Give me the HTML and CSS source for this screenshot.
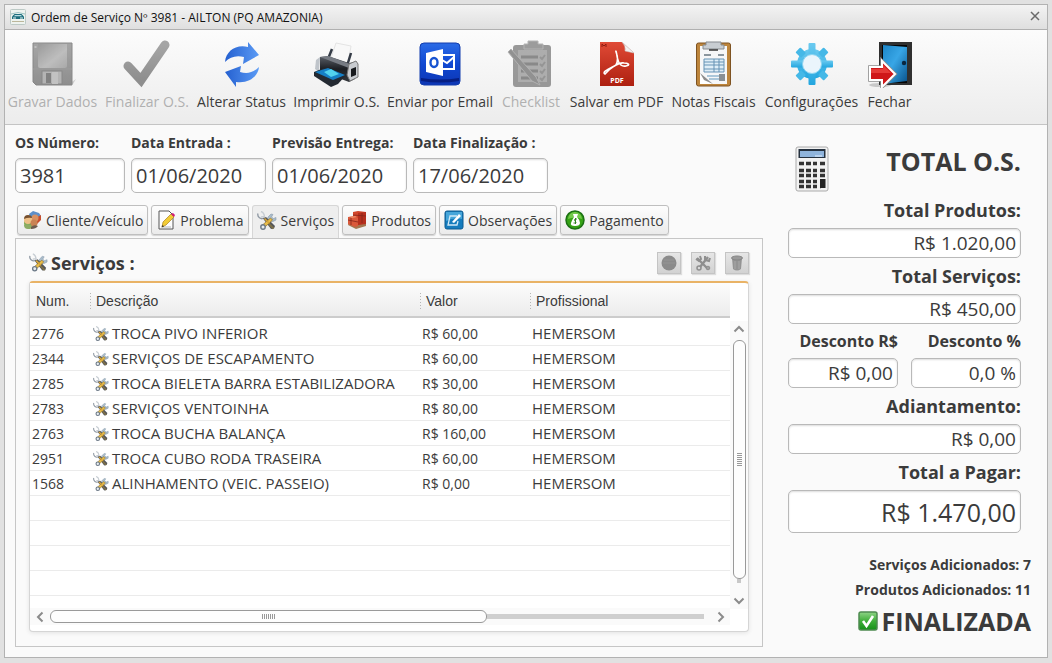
FILE: index.html
```html
<!DOCTYPE html>
<html lang="pt-BR">
<head>
<meta charset="utf-8">
<title>Ordem de Serviço Nº 3981 - AILTON (PQ AMAZONIA)</title>
<link rel="stylesheet" href="styles.css">
</head>
<body>
<svg class="defs" aria-hidden="true">
  <defs>
    <linearGradient id="gray" x1="0" y1="0" x2="0" y2="1"><stop offset="0" stop-color="#979797"/><stop offset="1" stop-color="#7d7d7d"/></linearGradient>
    <linearGradient id="metal" x1="0" y1="0" x2="1" y2="1"><stop offset="0" stop-color="#8a8a8a"/><stop offset=".6" stop-color="#b4b4b4"/><stop offset="1" stop-color="#9c9c9c"/></linearGradient>
    <linearGradient id="blue" x1="0" y1="0" x2="1" y2="0"><stop offset="0" stop-color="#2560d0"/><stop offset="1" stop-color="#5b9bf5"/></linearGradient>
    <linearGradient id="outlook" x1="0" y1="0" x2="0" y2="1"><stop offset="0" stop-color="#2b6be6"/><stop offset=".5" stop-color="#1048d2"/><stop offset="1" stop-color="#0d36b4"/></linearGradient>
    <linearGradient id="red" x1="0" y1="0" x2="0" y2="1"><stop offset="0" stop-color="#e04a36"/><stop offset="1" stop-color="#ad2010"/></linearGradient>
    <linearGradient id="gear" x1="0" y1="0" x2="0" y2="1"><stop offset="0" stop-color="#6bcaf0"/><stop offset="1" stop-color="#23a6df"/></linearGradient>
    <linearGradient id="door" x1="0" y1="0" x2="1" y2="1"><stop offset="0" stop-color="#1d86c8"/><stop offset=".45" stop-color="#38a6e6"/><stop offset="1" stop-color="#08518a"/></linearGradient>
    <linearGradient id="printer" x1="0" y1="0" x2="0" y2="1"><stop offset="0" stop-color="#5b6068"/><stop offset=".5" stop-color="#1c1f24"/><stop offset="1" stop-color="#34383d"/></linearGradient>
    <linearGradient id="green" x1="0" y1="0" x2="0" y2="1"><stop offset="0" stop-color="#8fd487"/><stop offset=".5" stop-color="#3fae39"/><stop offset="1" stop-color="#159018"/></linearGradient>
    <symbol id="tools" viewBox="0 0 20 20">
      <path d="M1 2.500a4 4 0 0 0 6 4.500l9 10" fill="none" stroke="#8d97a2" stroke-width="1.300"/>
      <path d="M4 .5q3 1 3.500 5L4 6" fill="none" stroke="#c6ccd2" stroke-width="1.400"/>
      <path d="M11 6l3-3 2 .5-1.500 2.500 2 1.500 2.500-1v2.500l-3 1.500-6-.5z" fill="#a9bccb" stroke="#8a9bab" stroke-width=".6"/>
      <path d="M6 7.500l3-1.500 9 9-1 2.500-3 .5z" fill="#54565a"/>
      <path d="M13.500 7l2 2L8 16l-2.500-2z" fill="#e8bd4a" stroke="#8f6e25" stroke-width=".7"/>
      <path d="M7.500 7.500l5 5" stroke="#d6a63a" stroke-width="1.600"/>
      <circle cx="6" cy="16" r="2.200" fill="#e7ecf0" stroke="#6c7987" stroke-width="1.400"/>
      <path d="M12 13l4.500 4.500" stroke="#7d7048" stroke-width="2"/>
    </symbol>
  </defs>
</svg>
<main class="window">
  <header class="titlebar">
    <svg class="app-icon" viewBox="0 0 16 16"><rect x=".5" y=".5" width="15" height="15" rx="1" fill="#eef3ef" stroke="#bcc9c5"/><path d="M1 5q7-3 14 0" fill="none" stroke="#9cc4c4"/><path d="M2 7.500L4.500 5h7L14 7.500V10H2z" fill="#1d6f7d"/><path d="M5 6h6l1 1.300H4z" fill="#b7dce2"/><path d="M3 9h3M10 9h3" stroke="#e7f4f4"/><path d="M2 12.500h12" stroke="#bcb79b"/></svg>
    <h1 class="window-title">Ordem de Serviço Nº 3981 - AILTON (PQ AMAZONIA)</h1>
    <button class="close" type="button" aria-label="Fechar janela"><svg viewBox="0 0 10 10"><path d="M1 1l8 8M9 1L1 9" stroke="#6a6a6a" stroke-width="1.500"/></svg></button>
  </header>

  <nav class="toolbar" aria-label="Ações">
    <button class="tool" type="button" disabled>
      <svg viewBox="0 0 48 48"><path d="M40 44l7-5-3 5z" fill="#c9c9c9"/><path d="M4 3h39v42H7l-3-3z" fill="url(#gray)" stroke="#777"/><path d="M9 4h29v22a2 2 0 0 1-2 2H11a2 2 0 0 1-2-2z" fill="url(#metal)"/><path d="M4 29h39" stroke="#8e8e8e"/><rect x="13" y="31" width="20" height="13" fill="#a9a9a9" stroke="#777"/><rect x="17" y="33" width="5" height="10" fill="#6e6e6e"/><rect x="23" y="32" width="6" height="12" fill="#bababa"/><path d="M5.500 6h2v2h-2z" fill="#b5b5b5"/></svg>
      <span>Gravar Dados</span></button>
    <button class="tool" type="button" disabled>
      <svg viewBox="0 0 48 48"><path d="M5 26l13 14L42 5" fill="none" stroke="url(#gray)" stroke-width="9" stroke-linecap="round"/></svg>
      <span>Finalizar O.S.</span></button>
    <button class="tool" type="button">
      <svg viewBox="0 0 48 48"><path d="M7 22C8 11 18 4 30 7V2l11 13-16 9 1-7c-8-2-14 0-19 5z" fill="url(#blue)"/><path d="M41 27c-1 10-11 17-23 15v5L7 32l16-6-1 6c7 2 13 1 19-5z" fill="url(#blue)"/></svg>
      <span>Alterar Status</span></button>
    <button class="tool" type="button">
      <svg viewBox="0 0 48 48"><path d="M18 18l5-15 15 3-3 18z" fill="#f8f8f8" stroke="#e4e4e4"/><path d="M19 9l-4 10M38 13l-4 13" stroke="#343b46" stroke-width="2.500"/><path d="M7 17l8-1 21 7 7-1-1 17-6 3L7 31z" fill="url(#printer)"/><path d="M7 17l8-1 22 8-1 4z" fill="#767b83"/><path d="M7 17l-4 3-1 9 4 3z" fill="#bfc4ca"/><path d="M36 24l7-3 2 3v13l-8 4-3-6z" fill="#c9ccd0" stroke="#777"/><path d="M38 29l5-2v8l-5 2z" fill="#17191c"/><path d="M1 32l10-4 22 7-8 9-7 3L1 36z" fill="#242a32"/><path d="M2 32l13-4 17 7-12 5z" fill="#1680c6"/><path d="M11 32l7-3 8 5-8 3z" fill="#52d2ee"/></svg>
      <span>Imprimir O.S.</span></button>
    <button class="tool" type="button">
      <svg viewBox="0 0 48 48"><rect x="4" y="3" width="40" height="42" rx="4" fill="url(#outlook)" stroke="#123dae"/><path d="M5 41q19 3 38 0v-3q-19 3-38 0z" fill="#061f83"/><path d="M26 15h12v14H26z" fill="none" stroke="#fff" stroke-width="2"/><path d="M26 20l5 3 7-6" fill="none" stroke="#fff" stroke-width="2"/><path d="M10 13l17-4v27l-17-4z" fill="#fff"/><ellipse cx="18" cy="22.500" rx="3.500" ry="4.500" fill="none" stroke="#1753d1" stroke-width="2.400"/></svg>
      <span>Enviar por Email</span></button>
    <button class="tool" type="button" disabled>
      <svg viewBox="0 0 48 48"><rect x="6" y="5" width="38" height="42" rx="3" fill="#898989"/><path d="M11 10h29v32H11z" fill="#a1a1a1"/><path d="M17 4h4V1h10v3h5v5H17z" fill="#8c8c8c" stroke="#a8a8a8"/><path d="M14 17h17M14 24h17M14 31h17M14 38h17" stroke="#777" stroke-width="3"/><path d="M33 17l2 2 3-4M33 24l2 2 3-4M33 31l2 2 3-4M33 38l2 2 3-4" stroke="#858585" fill="none" stroke-width="2"/><path d="M1 12l3-3 25 28 4 8-8-4z" fill="#808080" stroke="#a6a6a6"/></svg>
      <span>Checklist</span></button>
    <button class="tool" type="button">
      <svg viewBox="0 0 48 48"><path d="M7 2h22l12 11v33H7z" fill="url(#red)"/><path d="M29 2q4 4 3 9l9 2z" fill="#f1f1f1" stroke="#c7c7c7" stroke-width=".5"/><path d="M9 7V4l2 2 2-2v3" fill="none" stroke="#8e1a10"/><path d="M12 34c-4-2 6-6 11-9 4-7-1-14 0-14s0 17 10 15c5-1 2-3-2-3-5-1-14 5-19 11z" fill="none" stroke="#fff" stroke-width="1.600"/><text class="pdf-mark" x="24" y="43">PDF</text></svg>
      <span>Salvar em PDF</span></button>
    <button class="tool" type="button">
      <svg viewBox="0 0 48 48"><rect x="6.500" y="3" width="34" height="43" rx="2" fill="#bd853c" stroke="#7e5322"/><path d="M10 6h27v38H10z" fill="#f6f7f8"/><path d="M13 5h3V2h15v3h3v4H13z" fill="#c8cdd2" stroke="#858a8f"/><path d="M19 10h9" stroke="#333" stroke-width="1.500"/><path d="M14 15h7M28 15h6" stroke="#8b969e" stroke-width="2"/><path d="M14 19h20v13H14z" fill="#dfeef7" stroke="#6793b5"/><path d="M14 22h20M14 25h20M14 29h20M24 19v13M29 19v13" stroke="#6793b5"/><path d="M17 36h12M19 39h10" stroke="#abc7da" stroke-width="2"/><path d="M29 34h6v7h-6z" fill="#8a9095"/><path d="M10 33l13 11H10z" fill="#fff"/><path d="M10 33l13 11-9-4z" fill="#8d8d8d"/></svg>
      <span>Notas Fiscais</span></button>
    <button class="tool" type="button">
      <svg viewBox="0 0 48 48"><g fill="url(#gear)"><circle cx="24" cy="24" r="15"/><rect x="20.500" y="3" width="7" height="42" rx="1"/><rect x="3" y="20.500" width="42" height="7" rx="1"/></g><g fill="#45b8e7" transform="rotate(45 24 24)"><rect x="20.500" y="4" width="7" height="8" rx="1"/><rect x="20.500" y="36" width="7" height="8" rx="1"/><rect x="4" y="20.500" width="8" height="7" rx="1"/><rect x="36" y="20.500" width="8" height="7" rx="1"/></g><circle cx="24" cy="24" r="9.500" fill="#eaf5fc" stroke="#8bd4f1"/></svg>
      <span>Configurações</span></button>
    <button class="tool" type="button">
      <svg viewBox="0 0 48 48"><ellipse cx="14" cy="45" rx="11" ry="2" fill="#c8c8c8"/><path d="M13 2h33v43H13z" fill="#303030"/><path d="M16 5h25v38H16z" fill="#050505"/><path d="M17 5l24 2v34l-24 3z" fill="url(#door)"/><circle cx="38" cy="23" r="2.200" fill="#0a2740"/><path d="M4 27h12v-6l13 13-13 13v-7H4z" fill="#cf1719" stroke="#8d8d8d" stroke-width="3.600"/><path d="M4 27h12v-6l13 13-13 13v-7H4z" fill="#cf1719" stroke="#fff" stroke-width="2"/><path d="M5 29h12v-4l8 8H5z" fill="#e53a37"/></svg>
      <span>Fechar</span></button>
  </nav>

  <div class="content">
    <section class="order">
      <div class="fields">
        <label class="field field-short"><span>OS Número:</span><input type="text" value="3981"></label>
        <label class="field"><span>Data Entrada :</span><input type="text" value="01/06/2020"></label>
        <label class="field"><span>Previsão Entrega:</span><input type="text" value="01/06/2020"></label>
        <label class="field"><span>Data Finalização :</span><input type="text" value="17/06/2020"></label>
      </div>

      <div class="tabs" role="tablist">
        <button class="tab" type="button" role="tab"><svg viewBox="0 0 20 20"><circle cx="7" cy="13" r="5" fill="#79a84d"/><path d="M7 4l4-3 6 2 2 3-4 2-7-1z" fill="#5c8fc9"/><path d="M12 9l7-4v5l-4 4z" fill="#c84d2c"/><circle cx="13" cy="8" r="3.500" fill="#d99161"/><circle cx="6" cy="10" r="4" fill="#edbf86"/><path d="M2 9q0-4 4-4t4 3q-4-1-8 1z" fill="#76502f"/><circle cx="12" cy="13" r="3.500" fill="#c98355"/><path d="M2 15q5-3 9 2-1 2-5 2t-4-4z" fill="#8dac64"/><path d="M9 17q3-3 7-1-2 3-7 3z" fill="#6d5c50"/></svg>Cliente/Veículo</button>
        <button class="tab" type="button" role="tab"><svg viewBox="0 0 20 20"><path d="M3 1h10l4 4v14H3z" fill="#fdfdfd" stroke="#555"/><path d="M5 16h10v2H5z" fill="#d8dadd"/><path d="M6 17l1-5 8-8 3 3-8 8z" fill="#f2cc35" stroke="#aa821c" stroke-width=".7"/><path d="M15 4l2-1 2 2-1 2z" fill="#d31b76"/><path d="M6 17l.5-2 1.500 1.500z" fill="#222"/></svg>Problema</button>
        <button class="tab tab-active" type="button" role="tab" aria-selected="true"><svg><use href="#tools"/></svg>Serviços</button>
        <button class="tab" type="button" role="tab"><svg viewBox="0 0 20 20"><path d="M1 15l8 4 10-3v-3L2 12z" fill="#a37650"/><path d="M6 2l5-1 8 1v11l-9 2-4-3z" fill="#d1452a"/><path d="M11 3l8-1v12l-8 1z" fill="#b62f1d"/><path d="M1 7l7-1 3 2v8l-3 1-7-3z" fill="#da593b"/><path d="M4 7v8M15 3v10M1 10l10 2M6 5l13 1" stroke="#84261a" stroke-width=".8"/><path d="M2 7l6-1 2 1-5 1z" fill="#f08b66"/></svg>Produtos</button>
        <button class="tab" type="button" role="tab"><svg viewBox="0 0 20 20"><rect x="1" y="1" width="18" height="18" rx="2" fill="#167cbd" stroke="#0c5a90"/><path d="M2 2h16v7q-8-2-16 2z" fill="#46a6da"/><path d="M13 6H6l-2 9h9l1-4" fill="none" stroke="#cfe8f6" stroke-width="1.300"/><path d="M8 12l7-8 2 2-7 7z" fill="#fff"/></svg>Observações</button>
        <button class="tab" type="button" role="tab"><svg viewBox="0 0 20 20"><circle cx="10" cy="10" r="9" fill="#36a316" stroke="#1c7114" stroke-width="1.500"/><path d="M3 9a7 7 0 0 1 14 0q-7-3-14 0z" fill="#73ca4b"/><path d="M8 4h5l-1 3q3 3 3 6t-5 3-4-3 3-6z" fill="#fff"/><path d="M12 9h-2q-1 1 0 2t1 2H8.500M10.500 8v6" fill="none" stroke="#277d18" stroke-width=".9"/></svg>Pagamento</button>
      </div>

      <section class="panel">
        <div class="panel-head">
          <svg class="panel-icon"><use href="#tools"/></svg>
          <h2 class="panel-title">Serviços :</h2>
          <div class="panel-actions">
            <button class="mini" type="button" disabled aria-label="Adicionar"><svg viewBox="0 0 16 16"><circle cx="8" cy="8" r="7.500" fill="#8b8b8b"/><path d="M3 5h10M2 8h12" stroke="#959595"/></svg></button>
            <button class="mini" type="button" disabled aria-label="Editar"><svg viewBox="0 0 16 16"><path d="M2 3l11 11M13 2L5 12" stroke="#8f8f8f" stroke-width="2.400"/><path d="M1 4l3 2 2-2-1-3M10 1v4l4 1 1-3" fill="none" stroke="#8f8f8f" stroke-width="2"/><circle cx="4" cy="13" r="2" fill="none" stroke="#8f8f8f" stroke-width="1.500"/><circle cx="13" cy="13" r="1.800" fill="#a0a0a0" stroke="#8f8f8f"/></svg></button>
            <button class="mini" type="button" disabled aria-label="Excluir"><svg viewBox="0 0 16 16"><path d="M3 3l1 11q4 3 8 0l1-11z" fill="#949494"/><ellipse cx="8" cy="3" rx="5.500" ry="2" fill="#999" stroke="#858585"/><path d="M6 6v8M10 6v8" stroke="#a8a8a8"/></svg></button>
          </div>
        </div>

        <div class="grid">
          <table class="services">
            <colgroup><col class="col-num"><col class="col-desc"><col class="col-value"><col></colgroup>
            <thead><tr><th scope="col">Num.</th><th scope="col">Descrição</th><th scope="col">Valor</th><th scope="col">Profissional</th></tr></thead>
            <tbody>
              <tr><td class="num">2776</td><td class="desc"><svg><use href="#tools"/></svg>TROCA PIVO INFERIOR</td><td class="num">R$ 60,00</td><td>HEMERSOM</td></tr>
              <tr><td class="num">2344</td><td class="desc"><svg><use href="#tools"/></svg>SERVIÇOS DE ESCAPAMENTO</td><td class="num">R$ 60,00</td><td>HEMERSOM</td></tr>
              <tr><td class="num">2785</td><td class="desc"><svg><use href="#tools"/></svg>TROCA BIELETA BARRA ESTABILIZADORA</td><td class="num">R$ 30,00</td><td>HEMERSOM</td></tr>
              <tr><td class="num">2783</td><td class="desc"><svg><use href="#tools"/></svg>SERVIÇOS VENTOINHA</td><td class="num">R$ 80,00</td><td>HEMERSOM</td></tr>
              <tr><td class="num">2763</td><td class="desc"><svg><use href="#tools"/></svg>TROCA BUCHA BALANÇA</td><td class="num">R$ 160,00</td><td>HEMERSOM</td></tr>
              <tr><td class="num">2951</td><td class="desc"><svg><use href="#tools"/></svg>TROCA CUBO RODA TRASEIRA</td><td class="num">R$ 60,00</td><td>HEMERSOM</td></tr>
              <tr><td class="num">1568</td><td class="desc"><svg><use href="#tools"/></svg>ALINHAMENTO (VEIC. PASSEIO)</td><td class="num">R$ 0,00</td><td>HEMERSOM</td></tr>
              <tr><td colspan="4"></td></tr>
              <tr><td colspan="4"></td></tr>
              <tr><td colspan="4"></td></tr>
              <tr><td colspan="4"></td></tr>
            </tbody>
          </table>
          <div class="vscroll">
            <button class="arrow" type="button" aria-label="Rolar para cima"><svg viewBox="0 0 12 12"><path d="M1.500 8.500L6 4l4.500 4.500" fill="none" stroke="#8b8b8b" stroke-width="2"/></svg></button>
            <div class="vthumb"><i class="grip grip-v"></i></div>
            <div class="vgroove"></div>
            <button class="arrow" type="button" aria-label="Rolar para baixo"><svg viewBox="0 0 12 12"><path d="M1.500 3.500L6 8l4.500-4.500" fill="none" stroke="#8b8b8b" stroke-width="2"/></svg></button>
          </div>
          <div class="hscroll">
            <button class="arrow" type="button" aria-label="Rolar para a esquerda"><svg viewBox="0 0 12 12"><path d="M8.500 1.500L4 6l4.500 4.500" fill="none" stroke="#8b8b8b" stroke-width="2"/></svg></button>
            <div class="hthumb"><i class="grip grip-h"></i></div>
            <div class="hgroove"></div>
            <button class="arrow" type="button" aria-label="Rolar para a direita"><svg viewBox="0 0 12 12"><path d="M3.500 1.500L8 6l-4.500 4.500" fill="none" stroke="#8b8b8b" stroke-width="2"/></svg></button>
          </div>
        </div>
      </section>
    </section>

    <aside class="totals">
      <div class="sums">
        <div class="totals-head">
          <svg class="calc" viewBox="0 0 34 46"><rect x="1" y="1" width="32" height="44" rx="2" fill="#f2f2f2" stroke="#aaa"/><rect x="3.500" y="3" width="27" height="9" fill="#25313f"/><rect x="5" y="5" width="24" height="6" fill="#8fb4dc"/><path d="M20 10h7" stroke="#e4f0ff"/><path d="M4 17.500h26M4 24.500h26M4 29.500h26M4 35.500h22M4 40.500h22" stroke="#333" stroke-width="3.400" stroke-dasharray="5 2"/><path d="M23 15v28" stroke="#f2f2f2" stroke-width="2"/><rect x="25" y="33" width="5.500" height="9" fill="#222"/></svg>
          <h2 class="totals-title">TOTAL O.S.</h2>
        </div>
        <label class="sum"><span>Total Produtos:</span><input type="text" value="R$ 1.020,00"></label>
        <label class="sum"><span>Total Serviços:</span><input type="text" value="R$ 450,00"></label>
        <div class="discounts">
          <label class="sum sum-small"><span>Desconto R$</span><input type="text" value="R$ 0,00"></label>
          <label class="sum sum-small"><span>Desconto %</span><input type="text" value="0,0 %"></label>
        </div>
        <label class="sum"><span>Adiantamento:</span><input type="text" value="R$ 0,00"></label>
        <label class="sum sum-grand"><span>Total a Pagar:</span><input type="text" value="R$ 1.470,00"></label>
      </div>
      <div class="status">
        <p class="count">Serviços Adicionados: 7</p>
        <p class="count">Produtos Adicionados: 11</p>
        <p class="state"><svg viewBox="0 0 20 20"><rect x="1" y="1" width="18" height="18" rx="2" fill="url(#green)" stroke="#4e8b50" stroke-width="1.500"/><path d="M5 10l3.500 5L15 5" fill="none" stroke="#fff" stroke-width="2.600"/></svg>FINALIZADA</p>
      </div>
    </aside>
  </div>
</main>
</body>
</html>
```

FILE: styles.css
```css
* { box-sizing: border-box; }

body {
  margin: 0;
  min-height: 100vh;
  display: flex;
  padding: 4px 4px 5px;
  background: #e1e1e1;
  color: #3b3b3b;
  font-family: "Open Sans", "Noto Sans", sans-serif;
  font-size: 15px;
}

button, input { font: inherit; color: inherit; }
h1, h2, p { margin: 0; }
svg { display: block; flex: none; }
.defs { position: absolute; width: 0; height: 0; }

.window {
  flex: 1;
  display: flex;
  flex-direction: column;
  min-width: 0;
  border: 1px solid #b2b2b2;
  background: #fafafa;
}

/* title bar */
.titlebar {
  display: flex;
  align-items: center;
  height: 25px;
  padding: 0 7px 0 5px;
  gap: 5px;
  border-bottom: 1px solid #b0b0b0;
  background: linear-gradient(#f3f3f3, #dfdfdf);
}
.app-icon { width: 16px; height: 16px; }
.window-title {
  flex: 1;
  color: #111;
  font-size: 12px;
  font-weight: 400;
}
.close {
  padding: 0 0 2px;
  border: 0;
  background: none;
}
.close svg { width: 10px; height: 10px; }

/* toolbar */
.toolbar {
  display: grid;
  grid-template-columns: 91px 86px 91px 87px 108px 62px 97px 85px 99px 45px;
  gap: 6px;
  height: 95px;
  padding: 10px 2px 0;
  border-bottom: 1px solid #c4c4c4;
  background: linear-gradient(#fcfcfc, #ececec);
}
.tool {
  display: flex;
  flex-direction: column;
  align-items: center;
  gap: 3px;
  padding: 0;
  border: 0;
  background: none;
  font-size: 14px;
  line-height: 22px;
  white-space: nowrap;
}
.tool svg { width: 48px; height: 48px; }
.tool:disabled { color: #b0b0b0; }
.tool:disabled svg { opacity: 0.85; }
.pdf-mark {
  fill: #fff;
  font-size: 7px;
  font-weight: 700;
  text-anchor: middle;
}

/* content */
.content {
  flex: 1;
  display: flex;
  gap: 25px;
  padding: 0 16px 10px 10px;
}
.order {
  flex: 1;
  display: flex;
  flex-direction: column;
  min-width: 0;
  padding-top: 8px;
}

.fields { display: flex; gap: 6px; }
.field {
  display: flex;
  flex-direction: column;
  gap: 5px;
  width: 135px;
  font-size: 14px;
  font-weight: 700;
  line-height: 20px;
  white-space: nowrap;
}
.field-short { width: 110px; }
input {
  width: 100%;
  border: 1px solid #b9b9b9;
  border-radius: 5px;
  background: #fff;
  box-shadow: inset 0 1px 2px #dcdcdc;
  font-weight: 400;
}
.field input {
  height: 35px;
  padding: 0 4px;
  font-size: 20px;
}

/* tabs */
.tabs {
  display: flex;
  align-items: flex-start;
  gap: 3px;
  padding: 12px 2px 0;
}
.tab {
  display: flex;
  align-items: center;
  gap: 4px;
  height: 30px;
  margin-bottom: 3px;
  padding: 0 4px;
  border: 1px solid #bfbfbf;
  border-radius: 3px;
  background: linear-gradient(#fdfdfd, #ebebeb);
  box-shadow: 0 1px 1px #d4d4d4;
  font-size: 14px;
  white-space: nowrap;
}
.tab svg { width: 20px; height: 20px; }
.tab-active {
  height: 33px;
  margin-bottom: 0;
  padding-bottom: 3px;
  border-color: #d6d6d6;
  border-bottom: 0;
  border-radius: 3px 3px 0 0;
  background: #eee;
  box-shadow: none;
}

/* services panel */
.panel {
  flex: 1;
  display: flex;
  flex-direction: column;
  padding: 10px 13px 14px;
  border: 1px solid #c6c6c6;
}
.panel-head {
  display: flex;
  align-items: center;
  gap: 3px;
  height: 32px;
  padding-bottom: 4px;
}
.panel-icon { width: 19px; height: 20px; }
.panel-title {
  flex: 1;
  font-size: 18px;
  line-height: 24px;
}
.panel-actions { display: flex; gap: 10px; }
.mini {
  display: grid;
  place-items: center;
  width: 24px;
  height: 22px;
  padding: 0;
  border: 1px solid #c4c4c4;
  background: linear-gradient(#e6e6e6, #d2d2d2);
  box-shadow: 1px 1px 1px #ddd;
}
.mini svg { width: 16px; height: 16px; }

.grid {
  flex: 1;
  display: grid;
  grid-template-columns: 1fr 18px;
  grid-template-rows: auto 1fr;
  border: 1px solid #d5d5d5;
  border-top: 2px solid #e9b366;
  border-radius: 4px;
  background: #fff;
  box-shadow: 0 1px 4px #e3e3e3;
}
.services {
  width: 100%;
  border-collapse: separate;
  border-spacing: 0;
  table-layout: fixed;
}
.col-num { width: 60px; }
.col-desc { width: 330px; }
.col-value { width: 110px; }
.services th {
  height: 35px;
  padding: 2px 6px 0;
  border-bottom: 2px solid #ccc;
  background: linear-gradient(#fcfcfc, #ececec);
  font-family: "Liberation Sans", Arial, sans-serif;
  font-size: 14px;
  font-weight: 400;
  text-align: left;
}
.services th + th {
  background:
    repeating-linear-gradient(#b5b5b5 0 1px, transparent 1px 3px) 0 10px / 1px 16px no-repeat,
    linear-gradient(#fcfcfc, #ececec);
}
.services td {
  height: 25px;
  padding: 2px 2px 0;
  border-bottom: 1px solid #ebebeb;
  line-height: 20px;
  vertical-align: baseline;
  white-space: nowrap;
}
.services tbody tr:first-child td {
  height: 28px;
  padding-top: 5px;
}
.services .num { font-size: 14px; }
.desc svg {
  display: inline-block;
  width: 16px;
  height: 16px;
  margin: 0 3px 0 1px;
  vertical-align: -3px;
}

/* scrollbars */
.arrow {
  display: grid;
  place-items: center;
  flex: none;
  width: 16px;
  height: 16px;
  padding: 0;
  border: 0;
  background: none;
}
.arrow svg { width: 12px; height: 12px; }
.vscroll {
  grid-column: 2;
  grid-row: 1 / 3;
  display: flex;
  flex-direction: column;
  align-items: center;
  margin: 38px 0 22px;
  background: #fafafa;
}
.vthumb, .hthumb {
  display: grid;
  place-items: center;
  border: 1px solid #999;
  border-radius: 6px;
  background: #fdfdfd;
}
.vthumb {
  flex: 1;
  width: 13px;
  margin-top: 3px;
}
.vgroove {
  width: 4px;
  height: 4px;
  margin-bottom: 10px;
  background: #c8c8c8;
}
.grip-v {
  width: 5px;
  height: 13px;
  background: repeating-linear-gradient(#999 0 1px, transparent 1px 2px);
}
.grip-h {
  width: 13px;
  height: 5px;
  background: repeating-linear-gradient(90deg, #999 0 1px, transparent 1px 2px);
}
.hscroll {
  grid-column: 1;
  grid-row: 2;
  display: flex;
  align-items: center;
  align-self: start;
  height: 17px;
  margin-top: 12px;
  padding: 0 1px 0 2px;
  background: #fafafa;
}
.hthumb {
  flex: 2 1 0;
  height: 13px;
  margin-left: 2px;
}
.hgroove {
  flex: 1 1 0;
  height: 5px;
  margin-right: 9px;
  background: #cfcfcf;
}

/* totals */
.totals {
  flex: none;
  display: flex;
  flex-direction: column;
  justify-content: space-between;
  width: 243px;
  text-align: right;
}
.sums { padding-right: 10px; }
.totals-head {
  display: flex;
  align-items: flex-start;
  justify-content: space-between;
  height: 67px;
  padding: 21px 0 0 7px;
}
.calc { width: 34px; height: 46px; }
.totals-title {
  font-size: 25px;
  line-height: 30px;
}
.sum {
  display: block;
  font-size: 18px;
  font-weight: 700;
  line-height: 36px;
}
.sum span { display: block; }
.sum input {
  display: block;
  height: 30px;
  padding: 0 4px;
  font-size: 19px;
  text-align: right;
}
.discounts {
  display: grid;
  grid-template-columns: 1fr 1fr;
  gap: 13px;
}
.sum-small { font-size: 16px; line-height: 34px; }
.sum-grand input { height: 43px; font-size: 25px; }
.status { padding-bottom: 7px; }
.count {
  font-size: 14px;
  font-weight: 700;
  line-height: 25px;
}
.state {
  display: flex;
  align-items: center;
  justify-content: flex-end;
  gap: 4px;
  font-size: 25px;
  font-weight: 700;
  line-height: 38px;
}
.state svg { width: 20px; height: 20px; }
```
